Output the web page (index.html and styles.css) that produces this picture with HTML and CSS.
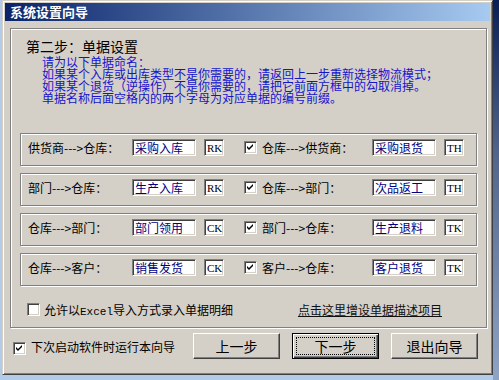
FILE: index.html
```html
<!DOCTYPE html>
<html lang="zh-CN">
<head>
    <meta charset="UTF-8">
    <meta name="viewport" content="width=device-width, initial-scale=1.0">
    <title>系统设置向导</title>
    <link rel="stylesheet" href="styles.css">
</head>
<body>
    <div class="desktop">
        <div class="window">
            <div class="titlebar">系统设置向导</div>

            <div class="panel">
                <div class="step-title">第二步：单据设置</div>
                <div class="notes">
                    <div>请为以下单据命名：</div>
                    <div>如果某个入库或出库类型不是你需要的，请返回上一步重新选择物流模式；</div>
                    <div>如果某个退货（逆操作）不是你需要的，请把它前面方框中的勾取消掉。</div>
                    <div>单据名称后面空格内的两个字母为对应单据的编号前缀。</div>
                </div>

                <div class="bill-rows">
                    <div class="bill-row">
                        <span class="row-label">供货商--->仓库：</span>
                        <input class="name-box" type="text" value="采购入库">
                        <input class="code-box" type="text" value="RK">
                        <span class="check"><svg width="11" height="11" viewBox="0 0 11 11"><polygon points="2,4 4,6 8,2 8,4 4,8 2,6" fill="#000"/></svg></span>
                        <span class="row-label right">仓库--->供货商：</span>
                        <input class="name-box" type="text" value="采购退货">
                        <input class="code-box" type="text" value="TH">
                    </div>
                    <div class="bill-row">
                        <span class="row-label">部门--->仓库：</span>
                        <input class="name-box" type="text" value="生产入库">
                        <input class="code-box" type="text" value="RK">
                        <span class="check"><svg width="11" height="11" viewBox="0 0 11 11"><polygon points="2,4 4,6 8,2 8,4 4,8 2,6" fill="#000"/></svg></span>
                        <span class="row-label right">仓库--->部门：</span>
                        <input class="name-box" type="text" value="次品返工">
                        <input class="code-box" type="text" value="TH">
                    </div>
                    <div class="bill-row">
                        <span class="row-label">仓库--->部门：</span>
                        <input class="name-box" type="text" value="部门领用">
                        <input class="code-box" type="text" value="CK">
                        <span class="check"><svg width="11" height="11" viewBox="0 0 11 11"><polygon points="2,4 4,6 8,2 8,4 4,8 2,6" fill="#000"/></svg></span>
                        <span class="row-label right">部门--->仓库：</span>
                        <input class="name-box" type="text" value="生产退料">
                        <input class="code-box" type="text" value="TK">
                    </div>
                    <div class="bill-row">
                        <span class="row-label">仓库--->客户：</span>
                        <input class="name-box" type="text" value="销售发货">
                        <input class="code-box" type="text" value="CK">
                        <span class="check"><svg width="11" height="11" viewBox="0 0 11 11"><polygon points="2,4 4,6 8,2 8,4 4,8 2,6" fill="#000"/></svg></span>
                        <span class="row-label right">客户--->仓库：</span>
                        <input class="name-box" type="text" value="客户退货">
                        <input class="code-box" type="text" value="TK">
                    </div>
                </div>

                <div class="excel-row">
                    <span class="check"></span>
                    <span class="check-text">允许以<span class="latin">Excel</span>导入方式录入单据明细</span>
                    <a class="add-link" href="#">点击这里增设单据描述项目</a>
                </div>
            </div>

            <div class="bottom-bar">
                <span class="check bottom-check"><svg width="11" height="11" viewBox="0 0 11 11"><polygon points="2,4 4,6 8,2 8,4 4,8 2,6" fill="#000"/></svg></span>
                <span class="check-text">下次启动软件时运行本向导</span>
                <button class="btn first">上一步</button>
                <button class="btn default"><span class="focus">下一步</span></button>
                <button class="btn">退出向导</button>
            </div>
        </div>
        <div class="backdrop"></div>
    </div>
</body>
</html>
```

FILE: styles.css
```css
* {
    margin: 0;
    padding: 0;
    box-sizing: border-box;
}

body {
    font-family: "Noto Sans CJK SC", "Noto Sans", sans-serif;
    font-size: 12px;
    color: #000;
    background-color: #b3cbe8;
}

.desktop {
    display: flex;
    height: 380px;
}

.window {
    width: 491px;
    height: 375px;
    margin-left: 2px;
    padding: 2px;
    display: flex;
    flex-direction: column;
    background-color: #d4d0c8;
    border: 1px solid;
    border-color: #d4d0c8 #404040 #404040 #d4d0c8;
    box-shadow: inset 1px 1px 0 #fff, inset -1px -1px 0 #808080;
}

.backdrop {
    flex: 1;
    background: linear-gradient(#0a1f55, #50648c 40%, #8fa4c4);
}

.titlebar {
    height: 18px;
    padding-left: 5px;
    background: linear-gradient(to right, #0a246a, #a6caf0);
    color: #fff;
    font-size: 13px;
    font-weight: bold;
    line-height: 18px;
}

/* etched group frame */
.panel {
    height: 300px;
    margin: 7px 3px 0 5px;
    padding: 9px 9px 0;
    border: 1px solid #808080;
    box-shadow: inset 1px 1px 0 #fff, 1px 1px 0 #fff;
}

.step-title {
    padding-left: 6px;
    font-size: 14px;
    line-height: 16px;
}

.notes {
    margin-top: 2px;
    padding-left: 22px;
    color: #1414cc;
    line-height: 12px;
}

.bill-rows {
    display: flex;
    flex-direction: column;
    gap: 7px;
    margin-top: 29px;
}

.bill-row {
    height: 33px;
    display: flex;
    align-items: center;
    padding: 4px 0 8px 7px;
    border: 1px solid #808080;
    box-shadow: inset 1px 1px 0 #fff, 1px 1px 0 #fff;
}

.row-label {
    width: 104px;
    line-height: 17px;
}

.row-label.right {
    width: 110px;
    margin-left: 5px;
}

.name-box,
.code-box {
    height: 17px;
    padding: 0 2px;
    background-color: #fff;
    border: 1px solid;
    border-color: #808080 #fff #fff #808080;
    box-shadow: inset 1px 1px 0 #404040, inset -1px -1px 0 #d4d0c8;
    font-family: "Noto Sans CJK SC", sans-serif;
    font-size: 12px;
    color: #000080;
    outline: none;
}

.name-box {
    width: 64px;
}

.code-box {
    width: 20px;
    margin-left: 8px;
    padding: 0 0 0 2px;
    font-family: "Liberation Serif", serif;
    font-size: 11px;
    color: #000;
}

.check {
    width: 13px;
    height: 13px;
    flex-shrink: 0;
    display: flex;
    align-items: center;
    justify-content: center;
    background-color: #fff;
    border: 1px solid;
    border-color: #808080 #fff #fff #808080;
    box-shadow: inset 1px 1px 0 #404040, inset -1px -1px 0 #d4d0c8;
}

.bill-row .check {
    margin-left: 20px;
}

.excel-row {
    height: 16px;
    margin-top: 15px;
    padding-left: 7px;
    display: flex;
    align-items: center;
}

.check-text {
    margin-left: 4px;
}

.latin {
    font-family: "Liberation Mono", monospace;
    font-size: 11px;
}

.add-link {
    margin-left: auto;
    margin-right: 35px;
    color: #101010;
    text-decoration: underline;
}

.bottom-bar {
    height: 26px;
    margin-top: 5px;
    padding: 0 12px 0 8px;
    display: flex;
    align-items: center;
}

.bottom-check {
    margin-top: 4px;
}

.bottom-bar .check-text {
    margin-left: 5px;
}

.btn {
    width: 87px;
    height: 26px;
    margin-left: 12px;
    display: flex;
    align-items: center;
    justify-content: center;
    background-color: #d4d0c8;
    border: 1px solid;
    border-color: #fff #404040 #404040 #fff;
    box-shadow: inset -1px -1px 0 #808080;
    font-family: "Noto Sans CJK SC", sans-serif;
    font-size: 14px;
    color: #000;
}

.btn.first {
    margin-left: auto;
}

.btn.default {
    padding: 3px;
    border-color: #000;
    box-shadow: inset 1px 1px 0 #fff, inset -1px -1px 0 #404040, inset -2px -2px 0 #808080;
}

.focus {
    flex: 1;
    align-self: stretch;
    display: flex;
    align-items: center;
    justify-content: center;
    border: 1px dotted #000;
}
```
